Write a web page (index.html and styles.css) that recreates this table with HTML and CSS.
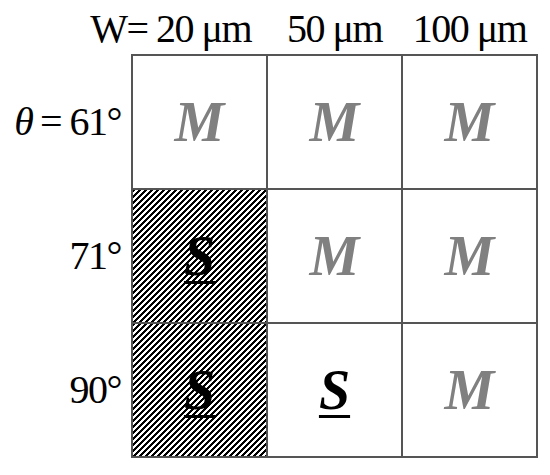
FILE: index.html
```html
<!DOCTYPE html>
<html lang="en">
<head>
    <meta charset="UTF-8">
    <title>Wetting modes</title>
    <link rel="stylesheet" href="styles.css">
</head>
<body>
    <div class="figure">
        <div class="corner"></div>
        <div class="heads">
            <div class="head head-first">W= 20 μm</div>
            <div class="head">50 μm</div>
            <div class="head">100 μm</div>
        </div>
        <div class="labels">
            <div class="label"><i>θ</i> = 61°</div>
            <div class="label">71°</div>
            <div class="label">90°</div>
        </div>
        <div class="matrix">
            <div class="cell"><span class="m">M</span></div>
            <div class="cell"><span class="m">M</span></div>
            <div class="cell"><span class="m">M</span></div>
            <div class="cell hatch"><span class="s">S</span></div>
            <div class="cell"><span class="m">M</span></div>
            <div class="cell"><span class="m">M</span></div>
            <div class="cell hatch"><span class="s">S</span></div>
            <div class="cell"><span class="s">S</span></div>
            <div class="cell"><span class="m">M</span></div>
        </div>
    </div>
</body>
</html>
```
FILE: styles.css
```css
body{
    margin: 0;
    background: #fff;
    font-family: "Liberation Serif", "Times New Roman", serif;
    color: #000;
}
.figure{
    display: grid;
    grid-template-columns: 131px 407px;
    grid-template-rows: 54px 404px;
}
.heads{
    display: grid;
    grid-template-columns: repeat(3, 133px);
    column-gap: 2px;
    padding: 0 2px 2px;
    align-items: end;
}
.head, .label{
    display: flex;
    justify-content: center;
    font-size: 40px;
    line-height: 46px;
    letter-spacing: -1.5px;
    white-space: nowrap;
}
.head-first{
    justify-content: flex-end;
    padding-right: 15px;
}
.labels{
    display: grid;
    grid-template-rows: repeat(3, 132px);
    row-gap: 2px;
    padding: 2px 10px 2px 0;
}
.label{
    align-items: center;
    justify-content: flex-end;
}
.label i{
    letter-spacing: 0;
    margin-right: 6px;
}
.matrix{
    display: grid;
    grid-template-columns: repeat(3, 133px);
    grid-template-rows: repeat(3, 132px);
    gap: 2px;
    padding: 2px;
    background: #555;
}
.cell{
    display: flex;
    align-items: center;
    justify-content: center;
    background: #fff;
    font-size: 56px;
    font-weight: 700;
    font-style: italic;
    line-height: 64px;
}
.cell.hatch{
    background-color: #fff;
    background-image: linear-gradient(135deg, #000 22%, transparent 22%, transparent 50%, #000 50%, #000 72%, transparent 72%);
    background-size: 6px 6px;
}
.m{
    color: #808080;
}
.s{
    color: #000;
    text-decoration: underline;
    text-decoration-thickness: 3px;
    text-underline-offset: 6px;
}
```
